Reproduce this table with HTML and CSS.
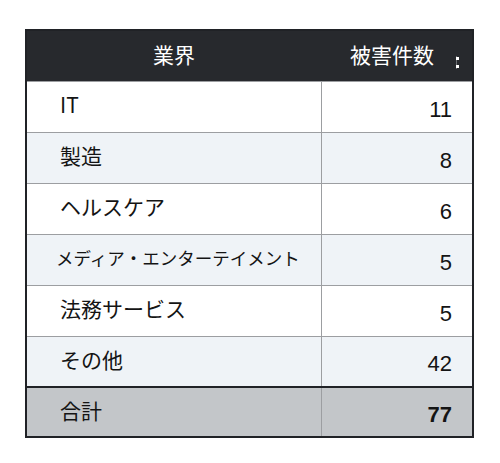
FILE: index.html
```html
<!DOCTYPE html>
<html lang="ja">
<head>
<meta charset="utf-8">
<link rel="stylesheet" href="styles.css">
</head>
<body>
<div class="wrap">
<table class="stats">
  <thead>
    <tr class="head">
      <th class="h-ind">業界</th>
      <th class="h-num">被害件数<span class="sort"><i></i><i></i></span></th>
    </tr>
  </thead>
  <tbody>
    <tr class="odd"><td class="ind">IT</td><td class="num">11</td></tr>
    <tr class="even"><td class="ind">製造</td><td class="num">8</td></tr>
    <tr class="odd"><td class="ind">ヘルスケア</td><td class="num">6</td></tr>
    <tr class="even"><td class="ind small">メディア・エンターテイメント</td><td class="num">5</td></tr>
    <tr class="odd"><td class="ind">法務サービス</td><td class="num">5</td></tr>
    <tr class="even"><td class="ind">その他</td><td class="num">42</td></tr>
    <tr class="total"><td class="ind">合計</td><td class="num bold">77</td></tr>
  </tbody>
</table>
</div>
</body>
</html>
```
FILE: styles.css
```css
html, body {
  margin: 0;
  padding: 0;
  background: #ffffff;
}
.wrap {
  padding: 29px 0 0 25px;
}
.stats {
  border-collapse: collapse;
  width: 449px;
  border: 2px solid #202226;
  font-family: "Noto Sans CJK JP", "Liberation Sans", sans-serif;
  color: #141414;
}
.head {
  background: #27292d;
  height: 51px;
}
.head th {
  color: #ffffff;
  font-weight: 400;
  font-size: 21px;
  padding: 0 0 4px 0;
  border: none;
  position: relative;
}
.h-ind {
  width: 294px;
  text-align: center;
}
.h-num {
  text-align: right;
  padding-right: 38px !important;
}
.sort {
  position: absolute;
  left: 135px;
  top: 25px;
  width: 3px;
  height: 13px;
  border-left: 1px solid #6b6e72;
  box-sizing: border-box;
}
.sort i {
  position: absolute;
  left: -1px;
  width: 3px;
  height: 3px;
  background: #ffffff;
}
.sort i:first-child { top: 1px; }
.sort i:last-child { top: 9px; }
tbody tr {
  height: 51px;
}
tbody tr.total {
  height: 50px;
}
td {
  border: 1px solid #9c9ea1;
  padding: 0;
}
.odd { background: #ffffff; }
.even { background: #eff3f7; }
.total { background: #c3c6c9; }
.total td { border-top: 2px solid #202226; }
.ind {
  font-size: 21px;
  padding: 0 0 5px 33px;
  vertical-align: middle;
}
.ind.small {
  font-size: 17.5px;
  padding-left: 29px;
}
.num {
  font-family: "Liberation Sans", Arial, sans-serif;
  font-size: 22px;
  text-align: right;
  padding: 6px 20px 0 0;
  vertical-align: middle;
}
.bold {
  font-weight: 700;
}
```
